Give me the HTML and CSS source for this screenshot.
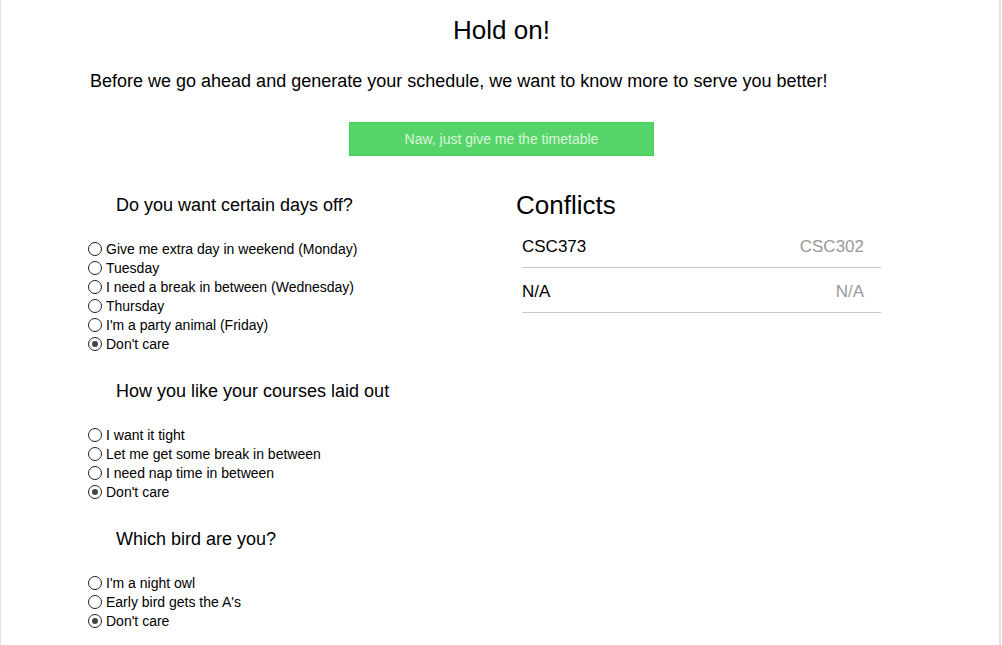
FILE: index.html
```html
<!DOCTYPE html>
<html>
<head>
<meta charset="utf-8">
<link rel="stylesheet" href="styles.css">
</head>
<body>
<div class="page">
  <h1 class="title">Hold on!</h1>
  <p class="intro">Before we go ahead and generate your schedule, we want to know more to serve you better!</p>
  <div class="btn-row"><button class="skip-btn">Naw, just give me the timetable</button></div>
  <div class="columns">
    <div class="prefs">
      <section class="group">
        <h2 class="q">Do you want certain days off?</h2>
        <label class="opt"><input type="radio" name="days"><span>Give me extra day in weekend (Monday)</span></label>
        <label class="opt"><input type="radio" name="days"><span>Tuesday</span></label>
        <label class="opt"><input type="radio" name="days"><span>I need a break in between (Wednesday)</span></label>
        <label class="opt"><input type="radio" name="days"><span>Thursday</span></label>
        <label class="opt"><input type="radio" name="days"><span>I'm a party animal (Friday)</span></label>
        <label class="opt"><input type="radio" name="days" checked><span>Don't care</span></label>
      </section>
      <section class="group">
        <h2 class="q">How you like your courses laid out</h2>
        <label class="opt"><input type="radio" name="layout"><span>I want it tight</span></label>
        <label class="opt"><input type="radio" name="layout"><span>Let me get some break in between</span></label>
        <label class="opt"><input type="radio" name="layout"><span>I need nap time in between</span></label>
        <label class="opt"><input type="radio" name="layout" checked><span>Don't care</span></label>
      </section>
      <section class="group">
        <h2 class="q">Which bird are you?</h2>
        <label class="opt"><input type="radio" name="bird"><span>I'm a night owl</span></label>
        <label class="opt"><input type="radio" name="bird"><span>Early bird gets the A's</span></label>
        <label class="opt"><input type="radio" name="bird" checked><span>Don't care</span></label>
      </section>
    </div>
    <div class="conflicts">
      <h2 class="conf-title">Conflicts</h2>
      <div class="conf-row"><span class="a">CSC373</span><span class="b">CSC302</span></div>
      <div class="conf-row"><span class="a">N/A</span><span class="b">N/A</span></div>
    </div>
  </div>
</div>
</body>
</html>
```

FILE: styles.css
```css
html, body {
  margin: 0;
  padding: 0;
  background: #ffffff;
}
body {
  font-family: "Liberation Sans", Arial, Helvetica, sans-serif;
  color: #000;
}
.page {
  width: 998px;
  height: 645px;
  border-left: 1px solid #e2e2e2;
  border-right: 2px solid #e2e2e2;
  box-sizing: content-box;
  overflow: hidden;
}
.title {
  margin: 0;
  padding: 15px 0 0 3px;
  font-size: 26px;
  line-height: 30px;
  font-weight: normal;
  text-align: center;
}
.intro {
  margin: 25px 0 0 89px;
  font-size: 18px;
  line-height: 22px;
}
.btn-row {
  display: flex;
  justify-content: center;
  margin-top: 30px;
}
.skip-btn {
  width: 305px;
  height: 34px;
  background: #57d469;
  border: 1px solid #3fd457;
  color: #d9f7d9;
  font-family: "Liberation Sans", Arial, sans-serif;
  font-size: 14px;
  padding: 0;
  margin-left: 3px;
}
.columns {
  display: grid;
  grid-template-columns: 428px 380px;
  padding-left: 87px;
  margin-top: 38px;
}
.group {
  margin-bottom: 27px;
}
.q {
  margin: 0 0 23px 28px;
  font-size: 18px;
  line-height: 22px;
  font-weight: normal;
}
.opt {
  display: flex;
  align-items: center;
  height: 19px;
  font-size: 14px;
}
.opt input {
  appearance: none;
  -webkit-appearance: none;
  width: 14px;
  height: 14px;
  margin: 0 4px 0 0;
  border: 1px solid #222;
  border-radius: 50%;
  box-sizing: border-box;
  background: #fff;
  display: grid;
  place-items: center;
}
.opt input:checked::after {
  content: "";
  width: 6px;
  height: 6px;
  border-radius: 50%;
  background: #444;
}
.conf-title {
  margin: -4px 0 3px 0;
  font-size: 26px;
  line-height: 30px;
  font-weight: normal;
}
.conf-row {
  display: flex;
  justify-content: space-between;
  margin-left: 6px;
  width: 359px;
  padding: 13px 17px 0 0;
  box-sizing: border-box;
  height: 45px;
  line-height: 22px;
  font-size: 17px;
  border-bottom: 1px solid #c8c8cc;
}
.conf-row .b {
  color: #999;
}
```
